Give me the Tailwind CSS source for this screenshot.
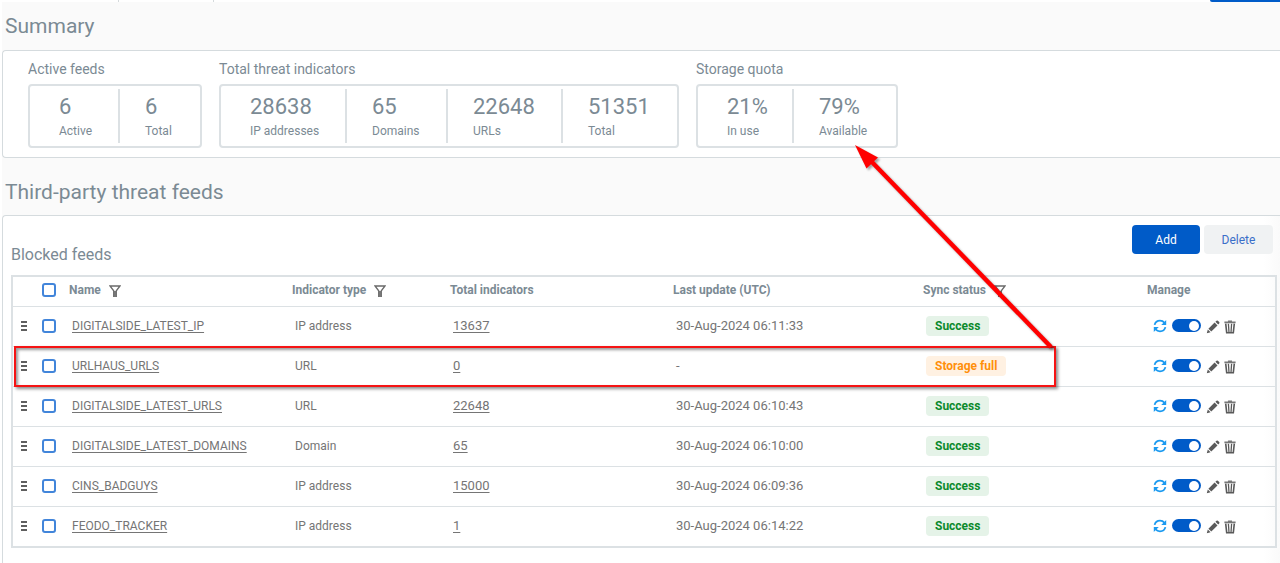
<!DOCTYPE html>
<html lang="en">
<head>
<meta charset="utf-8">
<meta name="viewport" content="width=device-width, initial-scale=1">
<title>Third-party threat feeds</title>
<script src="https://cdn.jsdelivr.net/npm/@tailwindcss/browser@4"></script>
</head>
<body class="relative min-h-screen overflow-x-hidden bg-white pl-0.5 font-['Roboto','Liberation_Sans',sans-serif] text-[#7b8a94]">
<svg class="hidden" aria-hidden="true">
  <symbol id="filter" viewBox="0 0 12 13"><path d="M1 1H11L7.3 5.8V11.4H4.7V5.8Z" fill="none" stroke="#6a6a6a" stroke-width="1.3"/><path d="M4.7 6H7.3V12H4.7Z" fill="#777"/></symbol>
  <symbol id="sync" viewBox="0 0 14 14"><path d="M1.6 5.9C2.2 3.4 4.4 1.7 7 1.7C8.8 1.7 10.4 2.5 11.4 3.8M12.4 8.1C11.8 10.6 9.6 12.3 7 12.3C5.2 12.3 3.6 11.5 2.6 10.2" fill="none" stroke="#1b9af0" stroke-width="1.8"/><path d="M13.2 1V6H8.2ZM.8 13V8H5.8Z" fill="#1b9af0"/></symbol>
  <symbol id="pencil" viewBox="0 0 14 14"><path d="M.8 13.2L1.8 9.4L4.6 12.2ZM2.4 8.7L8.6 2.5L11.5 5.4L5.3 11.6ZM9.4 1.8L10.5.8Q11.2.2 11.9.8L13.2 2.1Q13.8 2.8 13.2 3.5L12.2 4.6Z" fill="#5a5a5a"/></symbol>
  <symbol id="trash" viewBox="0 0 12 14"><path d="M.4 1.5H4V.5H8V1.5H11.6V3.2H.4Z" fill="#777"/><path d="M1.7 3.6L2.7 12.7H9.3L10.3 3.6" fill="none" stroke="#5a5a5a" stroke-width="1.6"/><path d="M4.4 3.7L5 12.5M7.6 3.7L7 12.5" stroke="#5a5a5a" stroke-width="1.3"/></symbol>
</svg>

<div class="flex h-0.5 overflow-hidden" aria-hidden="true">
  <div class="w-[117px] border-r border-[#d5dadc]"></div>
  <div class="w-[95px] border-r border-[#d5dadc]"></div>
  <div class="ml-auto w-[70px] rounded-bl-sm bg-[#005bc8]"></div>
</div>

<main class="bg-[#fafafa]">
  <h1 class="flex h-12 items-center pt-0.5 pl-[3px] text-[21px]">Summary</h1>
  <section class="flex flex-wrap gap-x-[17px] rounded-l-sm border border-r-0 border-[#d5dbde] bg-white px-[25px] pt-2 pb-[9px]">
    <div>
      <h2 class="mb-[5px] text-sm leading-5">Active feeds</h2>
      <dl class="flex rounded border-2 border-[#dce1e4] py-[3px]">
        <div class="flex h-[54px] w-[90px] flex-col-reverse justify-center border-r-2 border-[#dce1e4] pt-0.5 pl-[29px]"><dt class="text-xs leading-5">Active</dt><dd class="text-[22px] leading-7">6</dd></div>
        <div class="flex h-[54px] w-[80px] flex-col-reverse justify-center pt-0.5 pl-[25px]"><dt class="text-xs leading-5">Total</dt><dd class="text-[22px] leading-7">6</dd></div>
      </dl>
    </div>
    <div>
      <h2 class="mb-[5px] text-sm leading-5">Total threat indicators</h2>
      <dl class="flex rounded border-2 border-[#dce1e4] py-[3px]">
        <div class="flex h-[54px] w-[126px] flex-col-reverse justify-center border-r-2 border-[#dce1e4] pt-0.5 pl-[29px]"><dt class="text-xs leading-5">IP addresses</dt><dd class="text-[22px] leading-7">28638</dd></div>
        <div class="flex h-[54px] w-[101px] flex-col-reverse justify-center border-r-2 border-[#dce1e4] pt-0.5 pl-[25px]"><dt class="text-xs leading-5">Domains</dt><dd class="text-[22px] leading-7">65</dd></div>
        <div class="flex h-[54px] w-[115px] flex-col-reverse justify-center border-r-2 border-[#dce1e4] pt-0.5 pl-[25px]"><dt class="text-xs leading-5">URLs</dt><dd class="text-[22px] leading-7">22648</dd></div>
        <div class="flex h-[54px] w-[114px] flex-col-reverse justify-center pt-0.5 pl-[25px]"><dt class="text-xs leading-5">Total</dt><dd class="text-[22px] leading-7">51351</dd></div>
      </dl>
    </div>
    <div>
      <h2 class="mb-[5px] text-sm leading-5">Storage quota</h2>
      <dl class="flex rounded border-2 border-[#dce1e4] py-[3px]">
        <div class="flex h-[54px] w-[96px] flex-col-reverse justify-center border-r-2 border-[#dce1e4] pt-0.5 pl-[29px]"><dt class="text-xs leading-5">In use</dt><dd class="text-[22px] leading-7">21%</dd></div>
        <div class="flex h-[54px] w-[102px] flex-col-reverse justify-center pt-0.5 pl-[25px]"><dt class="text-xs leading-5">Available</dt><dd class="text-[22px] leading-7">79%</dd></div>
      </dl>
    </div>
  </section>

  <h1 class="flex h-[57px] items-center pt-3 pl-[3px] text-[21px]">Third-party threat feeds</h1>
  <section class="min-h-[348px] rounded-tl-sm border border-r-0 border-b-0 border-[#d5dbde] bg-white bg-linear-to-l from-[#fafafa] to-white to-[16px] pt-[9px] pr-[3px] pl-2">
    <div class="flex items-start justify-between">
      <h2 class="pt-5 text-base leading-5">Blocked feeds</h2>
      <div class="flex gap-1 pr-1 text-xs">
        <button type="button" class="h-[29px] w-[68px] rounded bg-[#005bc8] text-white">Add</button>
        <button type="button" class="h-[29px] w-[69px] rounded bg-[#f0f2f3] text-[#3a6fc9]">Delete</button>
      </div>
    </div>
    <table class="mt-2.5 w-full table-fixed border-separate border-spacing-0 border-2 border-[#dce1e4] text-left text-xs">
      <colgroup><col class="w-[21px]"><col class="w-[27px]"><col class="w-[223px]"><col class="w-[158px]"><col class="w-[223px]"><col class="w-[250px]"><col class="w-[224px]"><col class="w-[136px]"></colgroup>
      <thead>
        <tr class="h-[30px] text-[#7b8a94] *:border-b *:border-[#dce1e4] *:pb-1 *:font-bold">
          <td></td>
          <th class="pl-2"><input type="checkbox" aria-label="Select all feeds" class="block size-3.5 appearance-none rounded-[3px] border-2 border-[#4285da] bg-white checked:bg-[#2f78d6]"></th>
          <th scope="col" class="pl-2"><span class="flex items-center gap-2">Name <button type="button" aria-label="Filter by name" class="pt-1"><svg class="block h-[13px] w-3"><use href="#filter"/></svg></button></span></th>
          <th scope="col" class="pl-2"><span class="flex items-center gap-2">Indicator type <button type="button" aria-label="Filter by indicator type" class="pt-1"><svg class="block h-[13px] w-3"><use href="#filter"/></svg></button></span></th>
          <th scope="col" class="pl-2">Total indicators</th>
          <th scope="col" class="pl-2">Last update (UTC)</th>
          <th scope="col" class="pl-2"><span class="flex items-center gap-2">Sync status <button type="button" aria-label="Filter by sync status" class="pt-1"><svg class="block h-[13px] w-3"><use href="#filter"/></svg></button></span></th>
          <th scope="col" class="pl-2">Manage</th>
        </tr>
      </thead>
      <tbody id="feeds" class="text-[#757575]"></tbody>
    </table>
  </section>
</main>

<div class="pointer-events-none absolute top-[346px] left-3.5 h-[41px] w-[1042px] border-2 border-[#f51414] shadow-[2px_2px_3px_rgba(0,0,0,0.45),inset_2px_2px_3px_rgba(0,0,0,0.4)]"></div>
<svg class="pointer-events-none absolute top-[140px] left-[850px] drop-shadow-[2px_2px_1px_rgba(0,0,0,0.35)]" width="212" height="212" viewBox="850 140 212 212" aria-hidden="true">
  <path d="M1051 347L870 160" stroke="#ff0000" stroke-width="4.4"/>
  <path d="M855 145L878 157.5L866.5 168.5Z" fill="#ff0000"/>
</svg>

<script>
  const feeds = [
    ['DIGITALSIDE_LATEST_IP', 'IP address', '13637', '30-Aug-2024 06:11:33', true],
    ['URLHAUS_URLS', 'URL', '0', '-', false],
    ['DIGITALSIDE_LATEST_URLS', 'URL', '22648', '30-Aug-2024 06:10:43', true],
    ['DIGITALSIDE_LATEST_DOMAINS', 'Domain', '65', '30-Aug-2024 06:10:00', true],
    ['CINS_BADGUYS', 'IP address', '15000', '30-Aug-2024 06:09:36', true],
    ['FEODO_TRACKER', 'IP address', '1', '30-Aug-2024 06:14:22', true]
  ];
  document.getElementById('feeds').innerHTML = feeds.map(([name, type, total, updated, ok]) => `
    <tr class="h-10 *:border-b *:border-[#dce1e4] *:pb-0.5 last:h-[39px] last:*:border-b-0">
      <td class="pl-2"><span class="flex w-1.5 flex-col gap-0.5"><i class="h-0.5 bg-[#5f5f5f]"></i><i class="h-0.5 bg-[#5f5f5f]"></i><i class="h-0.5 bg-[#5f5f5f]"></i></span></td>
      <td class="pl-2"><input type="checkbox" aria-label="Select ${name}" class="block size-3.5 appearance-none rounded-[3px] border-2 border-[#4285da] bg-white checked:bg-[#2f78d6]"></td>
      <td class="pl-[11px]"><a href="#" class="underline underline-offset-2">${name}</a></td>
      <td class="pl-[11px]">${type}</td>
      <td class="pl-[11px] text-[13px]"><a href="#" class="underline underline-offset-2">${total}</a></td>
      <td class="pl-[11px] text-[13px]">${updated}</td>
      <td class="pl-[11px]">${ok
        ? '<span class="inline-block rounded bg-[#e5f3e8] px-[9px] font-bold leading-5 text-[#0c8a2c]">Success</span>'
        : '<span class="inline-block rounded bg-[#fff1e2] px-[9px] font-bold leading-5 text-[#ff8f0a]">Storage full</span>'}</td>
      <td class="pl-3.5"><span class="flex items-center">
        <button type="button" aria-label="Sync ${name}"><svg class="block size-3.5"><use href="#sync"/></svg></button>
        <input type="checkbox" role="switch" checked aria-label="Enable ${name}" class="ml-[5px] flex h-[13px] w-[29px] appearance-none items-center justify-start rounded-full bg-[#005bc8] px-0.5 before:size-2.5 before:rounded-full before:bg-white checked:justify-end">
        <button type="button" aria-label="Edit ${name}" class="ml-[5px] pt-[3px]"><svg class="block size-3.5"><use href="#pencil"/></svg></button>
        <button type="button" aria-label="Delete ${name}" class="ml-1 pt-[3px]"><svg class="block h-3.5 w-3"><use href="#trash"/></svg></button>
      </span></td>
    </tr>`).join('');
</script>
</body>
</html>
